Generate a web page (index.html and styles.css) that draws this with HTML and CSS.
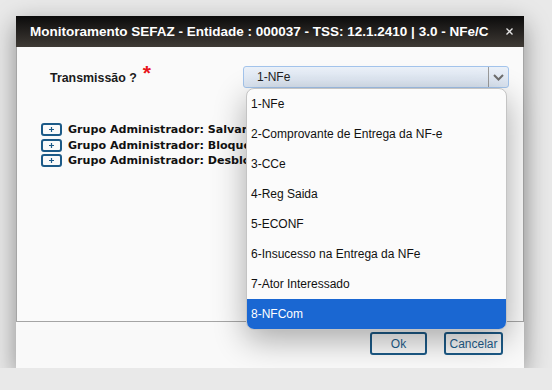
FILE: index.html
```html
<!DOCTYPE html>
<html lang="pt">
<head>
<meta charset="utf-8">
<title>Monitoramento SEFAZ</title>
<link rel="stylesheet" href="styles.css">
</head>
<body>
<div class="page">
  <div class="dialog">
    <div class="titlebar">
      <span class="title">Monitoramento SEFAZ - Entidade : 000037 - TSS: 12.1.2410 | 3.0 - NFe/C</span>
      <svg class="close" width="7" height="7" viewBox="0 0 7 7"><path d="M0.5 0.5 L6.5 6.5 M6.5 0.5 L0.5 6.5" stroke="#e6e6e6" stroke-width="1.3" fill="none"/></svg>
    </div>
    <div class="content">
      <div class="field">
        <label class="label">Transmissão ?<span class="req">*</span></label>
        <div class="select-wrap">
          <div class="select">
            <span class="select-value">1-NFe</span>
            <span class="select-arrow"><svg width="11" height="7" viewBox="0 0 11 7"><path d="M1 1 L5.5 5.5 L10 1" stroke="#6e6e6e" stroke-width="2" fill="none"/></svg></span>
          </div>
          <ul class="options">
            <li>1-NFe</li>
            <li>2-Comprovante de Entrega da NF-e</li>
            <li>3-CCe</li>
            <li>4-Reg Saida</li>
            <li>5-ECONF</li>
            <li>6-Insucesso na Entrega da NFe</li>
            <li>7-Ator Interessado</li>
            <li class="active">8-NFCom</li>
          </ul>
        </div>
      </div>
      <div class="groups">
        <div class="group"><span class="plus"><svg width="7" height="7" viewBox="0 0 7 7"><path d="M3.5 1 V6 M1 3.5 H6" stroke="#1c5a87" stroke-width="1.2" fill="none"/></svg></span><span class="group-text">Grupo Administrador: Salvar configurações</span></div>
        <div class="group"><span class="plus"><svg width="7" height="7" viewBox="0 0 7 7"><path d="M3.5 1 V6 M1 3.5 H6" stroke="#1c5a87" stroke-width="1.2" fill="none"/></svg></span><span class="group-text">Grupo Administrador: Bloquear configurações</span></div>
        <div class="group"><span class="plus"><svg width="7" height="7" viewBox="0 0 7 7"><path d="M3.5 1 V6 M1 3.5 H6" stroke="#1c5a87" stroke-width="1.2" fill="none"/></svg></span><span class="group-text">Grupo Administrador: Desbloquear configurações</span></div>
      </div>
    </div>
    <div class="footer">
      <button class="btn btn-ok">Ok</button>
      <button class="btn btn-cancel">Cancelar</button>
    </div>
  </div>
</div>
</body>
</html>
```
FILE: styles.css
```css
body {
  margin: 0;
  background: #e9e9e9;
  font-family: "Liberation Sans", Arial, sans-serif;
}

.page {
  padding: 16px 0 0 16px;
}

.dialog {
  width: 508px;
  background: #f9f9f9;
  box-shadow: 0 8px 24px rgba(0, 0, 0, 0.4);
}

.titlebar {
  height: 31px;
  display: flex;
  align-items: center;
  padding: 0 11px 0 14px;
  background: linear-gradient(#0b0b0b, #3f3a35);
  color: #fff;
}

.title {
  flex: 1;
  font-weight: bold;
  font-size: 13.5px;
  white-space: nowrap;
  overflow: hidden;
}

.close {
  display: block;
}

.content {
  box-sizing: content-box;
  padding-top: 19px;
  height: 255px;
  border: 1px solid #a5a5a5;
  border-top: 0;
  background: #fafafa;
}

.field {
  display: flex;
  align-items: center;
  padding-left: 33px;
}

.label {
  width: 193px;
  font-size: 12.4px;
  font-weight: bold;
  color: #1a1a1a;
}

.req {
  color: #e8141b;
  font-size: 21px;
  margin-left: 6px;
  position: relative;
  top: -2px;
  line-height: 10px;
}

.select-wrap {
  position: relative;
  width: 266px;
}

.select {
  height: 22px;
  box-sizing: border-box;
  border: 1px solid #a3c4ec;
  border-radius: 3px;
  background: linear-gradient(#ebf1f9, #dbe5f2);
  display: flex;
}

.select-value {
  flex: 1;
  padding-left: 13px;
  font-size: 12px;
  line-height: 20px;
  color: #222;
}

.select-arrow {
  width: 19px;
  border-left: 1px solid #9b9b9b;
  display: flex;
  align-items: center;
  justify-content: center;
}

.options {
  position: absolute;
  top: 22px;
  left: 3px;
  right: 2px;
  margin: 0;
  padding: 0;
  list-style: none;
  background: #fbfbfb;
  border: 1px solid #c4c4c4;
  border-radius: 8px;
  overflow: hidden;
  box-shadow: 0 10px 32px rgba(0, 0, 0, 0.32);
  z-index: 2;
}

.options li {
  height: 30px;
  line-height: 30px;
  padding-left: 4px;
  font-size: 12px;
  color: #111;
}

.options li.active {
  background: #1a67d2;
  color: #fff;
}

.groups {
  margin-top: 34px;
  padding-left: 24px;
}

.group {
  display: flex;
  align-items: center;
  height: 15.5px;
  font-family: "DejaVu Sans", Verdana, sans-serif;
  font-weight: bold;
  font-size: 11.1px;
  color: #111;
  white-space: nowrap;
}

.group-text {
  max-width: 178px;
  overflow: hidden;
}

.plus {
  width: 21px;
  height: 13px;
  box-sizing: border-box;
  border: 2px solid #1c5a87;
  border-radius: 3px;
  margin-right: 6px;
  display: flex;
  align-items: center;
  justify-content: center;
  flex: none;
}

.plus svg {
  display: block;
}

.footer {
  height: 46px;
  box-sizing: border-box;
  display: flex;
  justify-content: flex-end;
  align-items: flex-start;
  gap: 17px;
  padding: 10px 21px 0 0;
}

.btn {
  height: 23px;
  box-sizing: border-box;
  border: 2px solid #1c5a87;
  border-radius: 3px;
  background: transparent;
  color: #1f5e8c;
  font-family: "Liberation Sans", Arial, sans-serif;
  font-size: 12px;
  padding: 0;
}

.btn-ok {
  width: 57px;
}

.btn-cancel {
  width: 59px;
}
```
